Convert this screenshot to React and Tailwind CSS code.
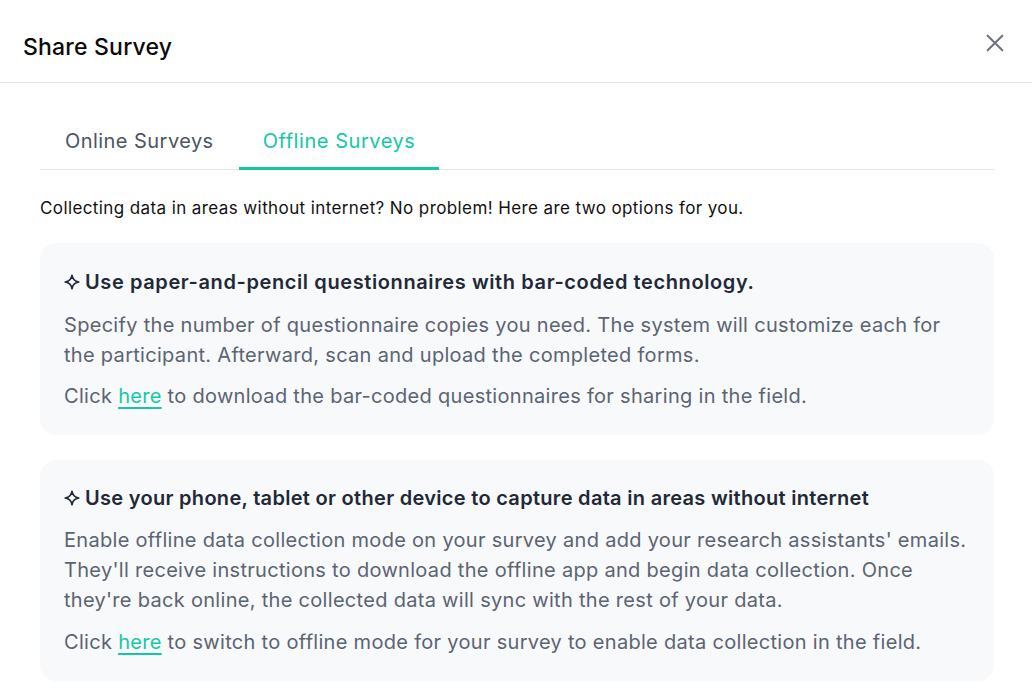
import React from "react";

function Star() {
  return (
    <svg width="16" height="16" viewBox="0 0 16 16" className="inline-block mr-[5px] align-[-1px]" fill="none" stroke="#1f2937" strokeWidth="1.6" strokeLinejoin="round">
      <path d="M8 1.2 C8.6 5.6 10.4 7.4 14.8 8 C10.4 8.6 8.6 10.4 8 14.8 C7.4 10.4 5.6 8.6 1.2 8 C5.6 7.4 7.4 5.6 8 1.2 Z" />
    </svg>
  );
}

export default function App() {
  return (
    <div className="w-[1032px] h-[691px] bg-white overflow-hidden" style={{ fontFamily: "Inter, 'Noto Sans', sans-serif" }}>
      <div className="h-[83px] border-b border-[#e5e7eb] flex items-center justify-between pl-[23px] pr-[24px]">
        <h1 className="text-[23px] font-medium text-[#0a0a0a] tracking-[0.2px] pt-[12px]">Share Survey</h1>
        <svg width="22" height="22" viewBox="0 0 24 24" fill="none" stroke="#6b7280" strokeWidth="2.2" strokeLinecap="round" className="mt-[4px] mr-[2px]">
          <path d="M4 4 L20 20 M20 4 L4 20" />
        </svg>
      </div>
      <div className="px-[38px] pt-[44px]">
        <div className="flex border-b border-[#e5e7eb] ml-[2px]">
          <div className="px-[25px] pb-[12px] leading-[28px] text-[20px] text-[#4b5563] tracking-[0.45px] border-b-[3px] border-transparent mb-[-1px]">Online Surveys</div>
          <div className="px-[24px] pb-[12px] leading-[28px] text-[20px] text-[#14c8a6] tracking-[0.55px] border-b-[3px] border-[#14c8a6] mb-[-1px]">Offline Surveys</div>
        </div>
        <p className="mt-[26px] ml-[2px] text-[17px] leading-[24px] text-[#111111] tracking-[0.4px]">
          Collecting data in areas without internet? No problem! Here are two options for you.
        </p>
        <div className="mt-[23px] ml-[2px] rounded-[16px] bg-[#f8f9fb] px-[24px] pt-[24px] pb-[24px]">
          <div className="text-[20px] font-semibold text-[#1f2937] leading-[30px] tracking-[0.6px]"><Star />Use paper-and-pencil questionnaires with bar-coded technology.</div>
          <p className="mt-[13px] text-[20px] text-[#5b6472] leading-[30px] tracking-[0.3px]">
            Specify the number of questionnaire copies you need. The system will customize each for the participant. Afterward, scan and upload the completed forms.
          </p>
          <p className="mt-[11px] text-[20px] text-[#5b6472] leading-[30px] tracking-[0.3px]">
            Click <a className="text-[#14c8a6] underline underline-offset-[4px]">here</a> to download the bar-coded questionnaires for sharing in the field.
          </p>
        </div>
        <div className="mt-[25px] ml-[2px] rounded-[16px] bg-[#f8f9fb] px-[24px] pt-[23px] pb-[24px]">
          <div className="text-[20px] font-semibold text-[#1f2937] leading-[30px] tracking-[0.3px]"><Star />Use your phone, tablet or other device to capture data in areas without internet</div>
          <p className="mt-[12px] text-[20px] text-[#5b6472] leading-[30px] tracking-[0.3px]">
            Enable offline data collection mode on your survey and add your research assistants' emails. They'll receive instructions to download the offline app and begin data collection. Once they're back online, the collected data will sync with the rest of your data.
          </p>
          <p className="mt-[12px] text-[20px] text-[#5b6472] leading-[30px] tracking-[0.3px]">
            Click <a className="text-[#14c8a6] underline underline-offset-[4px]">here</a> to switch to offline mode for your survey to enable data collection in the field.
          </p>
        </div>
      </div>
    </div>
  );
}
